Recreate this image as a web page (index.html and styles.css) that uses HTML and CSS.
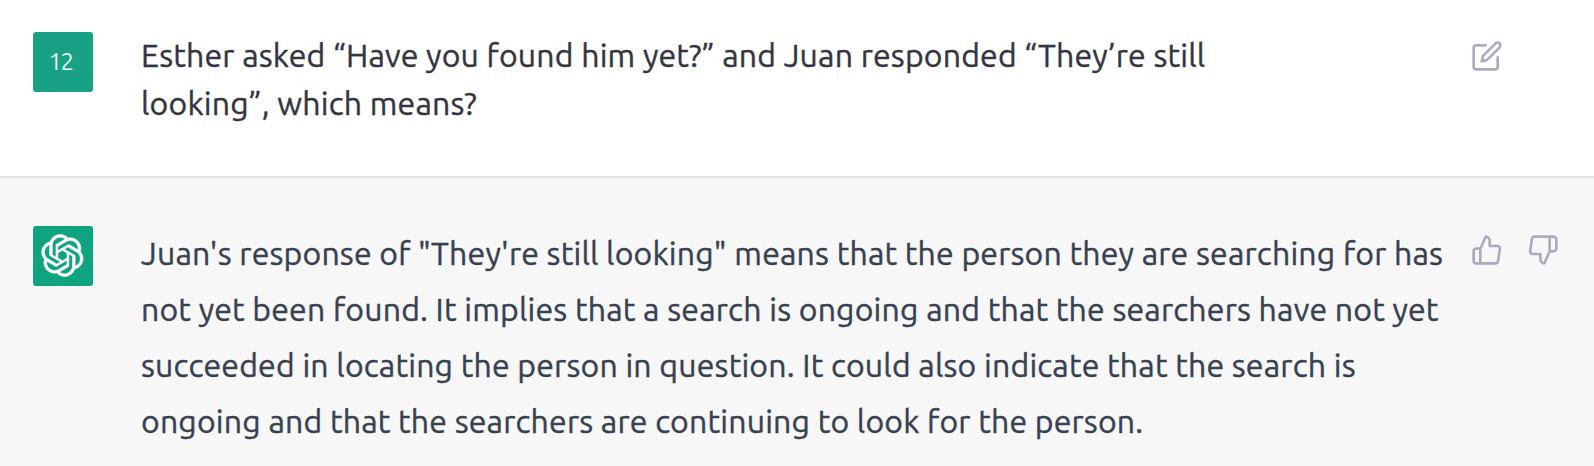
FILE: index.html
```html
<!DOCTYPE html>
<html lang="en">
<head>
<meta charset="utf-8">
<title>Conversation</title>
<link rel="stylesheet" href="styles.css">
</head>
<body>
<main class="chat">
  <section class="message message-user">
    <div class="avatar avatar-user">12</div>
    <p class="text text-user"><span class="line">Esther asked “Have you found him yet?” and Juan responded “They’re still</span> <span class="line">looking”, which means?</span></p>
    <div class="actions">
      <svg class="icon" viewBox="0 0 24 24"><path d="M11 4H4a2 2 0 0 0-2 2v14a2 2 0 0 0 2 2h14a2 2 0 0 0 2-2v-7"/><path d="M18.5 2.5a2.121 2.121 0 0 1 3 3L12 15l-4 1 1-4 9.500-9.500z"/></svg>
    </div>
  </section>
  <section class="message message-bot">
    <div class="avatar avatar-bot">
      <svg class="logo" viewBox="0 0 41 41"><path d="M37.5324 16.8707C37.9808 15.5241 38.1363 14.0974 37.9886 12.6859C37.8409 11.2744 37.3934 9.91076 36.676 8.68622C35.6126 6.83404 33.9882 5.3676 32.0373 4.4985C30.0864 3.62941 27.9098 3.40259 25.8215 3.85078C24.8796 2.7893 23.7219 1.94125 22.4257 1.36341C21.1295 0.785575 19.7249 0.491269 18.3058 0.500197C16.1708 0.495044 14.0893 1.16803 12.3614 2.42214C10.6335 3.67624 9.34853 5.44666 8.6917 7.47815C7.30085 7.76286 5.98686 8.3414 4.8377 9.17505C3.68854 10.0087 2.73073 11.0782 2.02839 12.312C0.956464 14.1591 0.498905 16.2988 0.721698 18.4228C0.944492 20.5467 1.83612 22.5449 3.268 24.1293C2.81966 25.4759 2.66413 26.9026 2.81182 28.3141C2.95951 29.7256 3.40701 31.0892 4.12437 32.3138C5.18791 34.1659 6.8123 35.6322 8.76321 36.5013C10.7141 37.3704 12.8907 37.5973 14.9789 37.1492C15.9208 38.2107 17.0786 39.0587 18.3747 39.6366C19.6709 40.2144 21.0755 40.5087 22.4946 40.4998C24.6307 40.5054 26.7133 39.8321 28.4418 38.5772C30.1704 37.3223 31.4556 35.5506 32.1119 33.5179C33.5027 33.2332 34.8167 32.6547 35.9659 31.821C37.115 30.9874 38.0728 29.9178 38.7752 28.684C39.8458 26.8371 40.3023 24.6979 40.0789 22.5748C39.8556 20.4517 38.9639 18.4544 37.5324 16.8707ZM22.4978 37.8849C20.7443 37.8874 19.0459 37.2733 17.6994 36.1501C17.7601 36.117 17.8666 36.0586 17.936 36.0161L25.9004 31.4156C26.1003 31.3019 26.2663 31.137 26.3813 30.9378C26.4964 30.7386 26.5563 30.5124 26.5549 30.2825V19.0542L29.9213 20.998C29.9389 21.0068 29.9541 21.0198 29.9656 21.0359C29.977 21.052 29.9842 21.0707 29.9867 21.0902V30.3889C29.9842 32.375 29.1946 34.2791 27.7909 35.6841C26.3872 37.0892 24.4838 37.8806 22.4978 37.8849ZM6.39227 31.0064C5.51397 29.4888 5.19742 27.7107 5.49804 25.9832C5.55718 26.0187 5.66048 26.0818 5.73461 26.1244L13.699 30.7248C13.8975 30.8408 14.1233 30.902 14.3532 30.902C14.583 30.902 14.8088 30.8408 15.0073 30.7248L24.731 25.1103V28.9979C24.7321 29.0177 24.7283 29.0376 24.7199 29.0556C24.7115 29.0736 24.6988 29.0893 24.6829 29.1012L16.6317 33.7497C14.9096 34.7416 12.8643 35.0097 10.9447 34.4954C9.02506 33.9811 7.38785 32.7263 6.39227 31.0064ZM4.29707 13.6194C5.17156 12.0998 6.55279 10.9364 8.19885 10.3327C8.19885 10.4013 8.19491 10.5228 8.19491 10.6071V19.808C8.19351 20.0378 8.25334 20.2638 8.36823 20.4629C8.48312 20.6619 8.64893 20.8267 8.84863 20.9404L18.5723 26.5542L15.206 28.4979C15.1894 28.5089 15.1703 28.5155 15.1505 28.5173C15.1307 28.5191 15.1107 28.516 15.0924 28.5082L7.04046 23.8557C5.32135 22.8601 4.06716 21.2235 3.55289 19.3046C3.03862 17.3858 3.30624 15.3413 4.29707 13.6194ZM31.955 20.0556L22.2312 14.4411L25.5976 12.4981C25.6142 12.4872 25.6333 12.4805 25.6531 12.4787C25.6729 12.4769 25.6928 12.4801 25.7111 12.4879L33.7631 17.1364C34.9967 17.849 36.0017 18.8982 36.6606 20.1613C37.3194 21.4244 37.6047 22.849 37.4832 24.2684C37.3617 25.6878 36.8382 27.0432 35.9743 28.1759C35.1103 29.3086 33.9415 30.1717 32.6047 30.6641C32.6047 30.5947 32.6047 30.4733 32.6047 30.3889V21.188C32.6066 20.9586 32.5474 20.7328 32.4332 20.5338C32.319 20.3348 32.154 20.1698 31.955 20.0556ZM35.3055 15.0128C35.2464 14.9765 35.1431 14.9142 35.069 14.8717L27.1045 10.2712C26.906 10.1554 26.6803 10.0943 26.4504 10.0943C26.2206 10.0943 25.9948 10.1554 25.7963 10.2712L16.0726 15.8858V11.9982C16.0715 11.9783 16.0753 11.9585 16.0837 11.9405C16.0921 11.9225 16.1048 11.9068 16.1207 11.8949L24.1719 7.25025C25.4053 6.53903 26.8158 6.19376 28.2383 6.25482C29.6608 6.31589 31.0364 6.78077 32.2044 7.59508C33.3723 8.40939 34.2842 9.53945 34.8334 10.8531C35.3826 12.1667 35.5464 13.6095 35.3055 15.0128ZM14.2424 21.9419L10.8752 19.9981C10.8576 19.9893 10.8423 19.9763 10.8309 19.9602C10.8195 19.9441 10.8122 19.9254 10.8098 19.9058V10.6071C10.8107 9.18295 11.2173 7.78848 11.9819 6.58696C12.7466 5.38544 13.8377 4.42659 15.1275 3.82264C16.4173 3.21869 17.8524 2.99464 19.2649 3.1767C20.6775 3.35876 22.0089 3.93941 23.1034 4.85067C23.0427 4.88379 22.937 4.94215 22.8668 4.98473L14.9024 9.58517C14.7025 9.69878 14.5366 9.86356 14.4215 10.0626C14.3065 10.2616 14.2466 10.4877 14.2479 10.7175L14.2424 21.9419ZM16.071 17.9991L20.4018 15.4978L24.7325 17.9975V22.9985L20.4018 25.4983L16.071 22.9985V17.9991Z"/></svg>
    </div>
    <p class="text text-bot"><span class="line">Juan's response of "They're still looking" means that the person they are searching for has</span> <span class="line">not yet been found. It implies that a search is ongoing and that the searchers have not yet</span> <span class="line">succeeded in locating the person in question. It could also indicate that the search is</span> <span class="line">ongoing and that the searchers are continuing to look for the person.</span></p>
    <div class="actions">
      <svg class="icon" viewBox="0 0 24 24"><path d="M14 9V5a3 3 0 0 0-3-3l-4 9v11h11.280a2 2 0 0 0 2-1.700l1.380-9a2 2 0 0 0-2-2.300zM7 22H4a2 2 0 0 1-2-2v-7a2 2 0 0 1 2-2h3"/></svg>
      <svg class="icon" viewBox="0 0 24 24"><path d="M10 15v4a3 3 0 0 0 3 3l4-9V2H5.720a2 2 0 0 0-2 1.700l-1.380 9a2 2 0 0 0 2 2.300zm7-13h2.670A2.310 2.310 0 0 1 22 4v7a2.310 2.310 0 0 1-2.330 2H17"/></svg>
    </div>
  </section>
</main>
</body>
</html>
```
FILE: styles.css
```css
body {
  margin: 0;
  background: #fff;
  font-family: Ubuntu, "Noto Sans", sans-serif;
}

.chat {
  display: flex;
  flex-direction: column;
  height: 466px;
  overflow: hidden;
}

.message {
  box-sizing: border-box;
  display: grid;
  grid-template-columns: 60px 1306px 1fr;
  column-gap: 48px;
  align-items: start;
  padding-left: 33px;
}

.message-user {
  height: 178px;
  padding-top: 31px;
  border-bottom: 2px solid #e3e3e3;
}

.message-bot {
  flex: 1;
  padding-top: 47px;
  background: #f7f7f8;
}

.avatar {
  box-sizing: border-box;
  display: flex;
  align-items: center;
  justify-content: center;
  width: 60px;
  height: 60px;
  margin-top: 1px;
  border-radius: 3px;
  color: #e6f5f2;
}

.avatar-user {
  padding-right: 5px;
  background: #19a186;
  font-size: 24px;
  line-height: 60px;
  letter-spacing: -1.5px;
}

.avatar-bot {
  background: #10a37f;
}

.logo {
  width: 43px;
  height: 43px;
  margin: -1px 1px 0 0;
  overflow: visible;
  fill: #fff;
  stroke: #fff;
  stroke-width: 0.5;
}

.text {
  margin: 0;
  font-size: 32px;
  letter-spacing: 0.19px;
  white-space: nowrap;
  -webkit-text-stroke: 0.4px;
}

.text-user {
  color: #343541;
  line-height: 48px;
}

.text-bot {
  color: #374151;
  line-height: 56px;
}

.line {
  display: block;
  width: max-content;
}

.actions {
  display: flex;
  gap: 24px;
  margin: 9px 0 0 -24px;
}

.icon {
  width: 32px;
  height: 32px;
  fill: none;
  stroke: #acacbe;
  stroke-width: 2;
  stroke-linecap: round;
  stroke-linejoin: round;
}
```
